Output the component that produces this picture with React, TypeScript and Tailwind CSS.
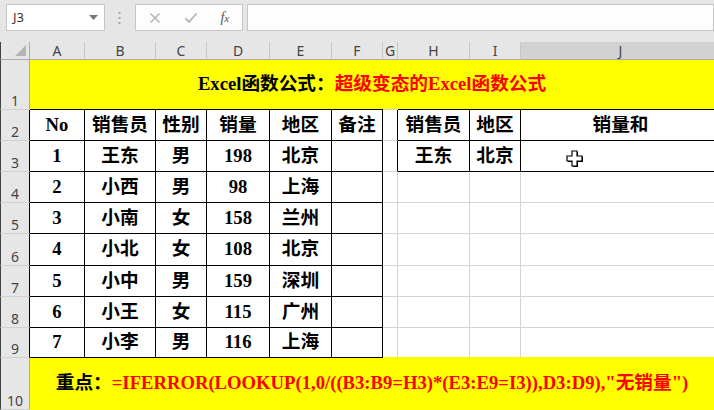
import React from "react";

const SERIF = "font-['Liberation_Serif','Noto_Sans_CJK_SC',serif]";
const UI = "font-['Noto_Sans','Liberation_Sans',sans-serif]";

const cols = [55, 71, 51, 63, 62, 51, 15, 72, 51, 200];
const letters = ["A", "B", "C", "D", "E", "F", "G", "H", "I", "J"];
const rowHeights = [31, 31, 31, 31, 32, 31, 31, 30];

const data: string[][] = [
  ["No", "销售员", "性别", "销量", "地区", "备注", "", "销售员", "地区", "销量和"],
  ["1", "王东", "男", "198", "北京", "", "", "王东", "北京", ""],
  ["2", "小西", "男", "98", "上海", "", "", "", "", ""],
  ["3", "小南", "女", "158", "兰州", "", "", "", "", ""],
  ["4", "小北", "女", "108", "北京", "", "", "", "", ""],
  ["5", "小中", "男", "159", "深圳", "", "", "", "", ""],
  ["6", "小王", "女", "115", "广州", "", "", "", "", ""],
  ["7", "小李", "男", "116", "上海", "", "", "", "", ""],
];

function rightCls(r: number, c: number) {
  if (c <= 5) return "border-r-black";
  if (r <= 1) return "border-r-black";
  return "border-r-[#d4d4d4]";
}
function bottomCls(r: number, c: number) {
  if (c <= 5) return "border-b-black";
  if (r === 7) return "border-b-[#ffff00]";
  if (c >= 7 && r <= 1) return "border-b-black";
  return "border-b-[#d4d4d4]";
}

function RowHead({ n, h, dark }: { n: number; h: number; dark?: boolean }) {
  return (
    <div
      className={`w-[30px] shrink-0 bg-[#e6e6e6] border-l border-l-[#444] border-r border-b border-b-[#d0d0d0] flex items-end justify-center text-[14px] leading-[14px] text-[#444] pb-[1px] ${UI} ${
        dark ? "border-r-black" : "border-r-[#ababab]"
      }`}
      style={{ height: h }}
    >
      {n}
    </div>
  );
}

function Cursor() {
  return (
    <svg className="absolute left-[566px] top-[150px]" width="18" height="18" viewBox="0 0 18 18">
      <polygon
        points="6,1 11,1 11,6 16,6 16,11 11,11 11,16 6,16 6,11 1,11 1,6 6,6"
        fill="#000"
        transform="translate(1,1)"
      />
      <polygon
        points="6,1 11,1 11,6 16,6 16,11 11,11 11,16 6,16 6,11 1,11 1,6 6,6"
        fill="#fff"
        stroke="#000"
        strokeWidth="1.2"
      />
    </svg>
  );
}

export default function App() {
  return (
    <div className="w-[714px] h-[410px] overflow-hidden bg-white relative select-none">
      {/* Top bar */}
      <div className="h-[42px] bg-[#e6e6e6] flex items-start pt-[4px]">
        <div className="ml-[6px] w-[101px] h-[27px] bg-white border border-[#c6c6c6] flex items-center justify-between pl-[6px] pr-[6px]">
          <span className={`text-[13px] text-[#333] ${UI}`}>J3</span>
          <svg width="9" height="5" viewBox="0 0 9 5">
            <polygon points="0,0 9,0 4.5,5" fill="#777" />
          </svg>
        </div>
        <div className="w-[31px] h-[27px] flex items-center justify-center">
          <svg width="3" height="12" viewBox="0 0 3 12">
            <rect x="0.5" y="0" width="2" height="2" fill="#a8a8a8" />
            <rect x="0.5" y="5" width="2" height="2" fill="#a8a8a8" />
            <rect x="0.5" y="10" width="2" height="2" fill="#a8a8a8" />
          </svg>
        </div>
        <div className="w-[109px] h-[27px] bg-[#fdfdfd] border border-[#c6c6c6] flex items-center">
          <div className="w-[38px] flex justify-center">
            <svg width="12" height="12" viewBox="0 0 12 12">
              <path d="M1.5 1.5 L10.5 10.5 M10.5 1.5 L1.5 10.5" stroke="#b4b4b4" strokeWidth="1.5" />
            </svg>
          </div>
          <div className="w-[34px] flex justify-center">
            <svg width="14" height="12" viewBox="0 0 14 12">
              <path d="M1.5 6.5 L5 10 L12.5 1.5" stroke="#b4b4b4" strokeWidth="1.8" fill="none" />
            </svg>
          </div>
          <div className="w-[34px] flex justify-center">
            <span className="font-['Liberation_Serif',serif] italic text-[14px] text-[#555] leading-none">
              f<span className="text-[11px]">x</span>
            </span>
          </div>
        </div>
        <div className="ml-[4px] w-[480px] h-[27px] bg-[#fdfdfd] border border-[#c6c6c6]" />
      </div>

      {/* Column header */}
      <div className="flex h-[18px]">
        <div className="w-[30px] shrink-0 bg-[#e6e6e6] border-l border-l-[#444] border-r border-r-[#ababab] border-b border-b-[#ababab] flex items-end justify-end pr-[3px] pb-[3px]">
          <svg width="11" height="11" viewBox="0 0 11 11">
            <polygon points="11,0 11,11 0,11" fill="#b4b4b4" />
          </svg>
        </div>
        {cols.map((w, i) => (
          <div
            key={i}
            className={`shrink-0 border-b border-b-[#ababab] border-r border-r-[#c6c6c6] flex items-center justify-center text-[14px] leading-none text-[#444] ${UI} ${
              i === 9 ? "bg-[#d2d2d2]" : "bg-[#e6e6e6]"
            }`}
            style={{ width: w }}
          >
            {letters[i]}
          </div>
        ))}
      </div>

      {/* Row 1 */}
      <div className="flex h-[50px]">
        <RowHead n={1} h={50} />
        <div className="flex-1 flex flex-col bg-[#ffff00]">
          <div className={`flex-1 flex items-center justify-center font-bold text-[18.67px] leading-none ${SERIF}`}>
            <span className="text-black">Excel函数公式：</span>
            <span className="text-[#ff0000]">超级变态的Excel函数公式</span>
          </div>
          <div className="flex h-[1px]">
            <div className="w-[353px] bg-black" />
            <div className="w-[15px] bg-[#d4d4d4]" />
            <div className="flex-1 bg-black" />
          </div>
        </div>
      </div>

      {/* Rows 2-9 */}
      {data.map((row, r) => (
        <div key={r} className="flex" style={{ height: rowHeights[r] }}>
          <RowHead n={r + 2} h={rowHeights[r]} dark />
          {row.map((txt, c) => (
            <div
              key={c}
              className={`shrink-0 border-r border-b flex items-center justify-center font-bold text-[18.67px] leading-none text-black ${SERIF} ${rightCls(
                r,
                c
              )} ${bottomCls(r, c)}`}
              style={{ width: cols[c] }}
            >
              {txt}
            </div>
          ))}
        </div>
      ))}

      {/* Row 10 */}
      <div className="flex h-[52px]">
        <RowHead n={10} h={52} />
        <div
          className={`flex-1 bg-[#ffff00] flex items-start justify-center pt-[16px] font-bold text-[18.67px] leading-none ${SERIF}`}
        >
          <span className="text-black">重点：</span>
          <span className="text-[#ff0000]">=IFERROR(LOOKUP(1,0/((B3:B9=H3)*(E3:E9=I3)),D3:D9),"无销量")</span>
        </div>
      </div>

      <Cursor />
    </div>
  );
}
